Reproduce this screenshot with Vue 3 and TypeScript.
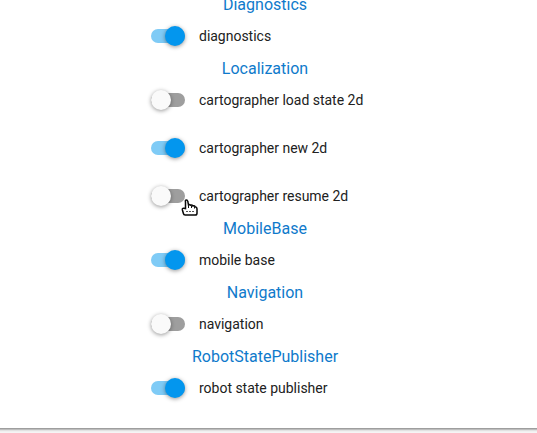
<script setup lang="ts">
interface Item { name: string; on: boolean; cursor?: boolean }
interface Group { title: string; items: Item[] }
const groups: Group[] = [
  { title: 'Diagnostics', items: [{ name: 'diagnostics', on: true }] },
  {
    title: 'Localization',
    items: [
      { name: 'cartographer load state 2d', on: false },
      { name: 'cartographer new 2d', on: true },
      { name: 'cartographer resume 2d', on: false, cursor: true },
    ],
  },
  { title: 'MobileBase', items: [{ name: 'mobile base', on: true }] },
  { title: 'Navigation', items: [{ name: 'navigation', on: false }] },
  { title: 'RobotStatePublisher', items: [{ name: 'robot state publisher', on: true }] },
]
</script>

<template>
  <main class="page">
    <section class="card">
      <div v-for="g in groups" :key="g.title" class="group">
        <h2 class="title">{{ g.title }}</h2>
        <div v-for="i in g.items" :key="i.name" class="row">
          <span class="switch" :class="{ on: i.on }"><span class="thumb"></span>
            <svg v-if="i.cursor" class="cursor" width="18" height="18" viewBox="0 0 18 18">
              <path d="M4.5 9.5V3Q4 1 5.3 1T6.8 2.5L7.5 6Q8.3 5.2 9.5 6.2Q11 5.7 12 7Q13.3 6.5 14.3 7.7Q16 8 16 9.7V14.2Q16 16 14.2 16H4.2Q2.7 16 2.4 14.5L1.4 11Q1 9.2 2.6 9.2Z" fill="#fff" stroke="#080808" stroke-width="1.5" />
              <path d="M7.5 6V9M10.5 6.8V9M13.5 7.8V9.5" stroke="#111" fill="none" />
              <path d="M5 12.5H14" stroke="#555" stroke-dasharray="2 1" />
            </svg>
          </span>
          <span class="label">{{ i.name }}</span>
        </div>
      </div>
    </section>
  </main>
</template>

<style>
body { margin: 0; background: #fff; }
</style>
<style scoped>
.page { height: 433px; overflow: hidden; font-family: Roboto, sans-serif; background: #f5f5f5; }
.card { display: flex; flex-direction: column; box-sizing: border-box; height: 428px; background: #fff; box-shadow: 0 1px #9e9e9e, 0 2px #bdbdbd, 0 3px #e2e2e2, 0 4px #f0f0f0; }
.group:first-child { margin-top: -4px; }
.title { margin: 0; width: 530px; height: 16px; line-height: 17px; font-size: 16px; font-weight: 400; text-align: center; color: #0f7acb; }
.row { display: flex; align-items: center; height: 48px; padding-left: 151px; gap: 14px; }
.switch { position: relative; display: flex; align-items: center; width: 34px; height: 14px; border-radius: 7px; background: #9e9e9e; }
.thumb { width: 20px; height: 20px; border-radius: 50%; background: #fafafa; box-shadow: 0 1px 4px rgba(0, 0, 0, .42); }
.on { background: #7fcbf6; }
.on .thumb { margin-left: 14px; background: #0396ee; }
.cursor { position: absolute; left: 30px; top: 10px; }
.label { font-size: 14px; line-height: 24px; letter-spacing: -0.015px; color: #212121; white-space: nowrap; }
</style>
